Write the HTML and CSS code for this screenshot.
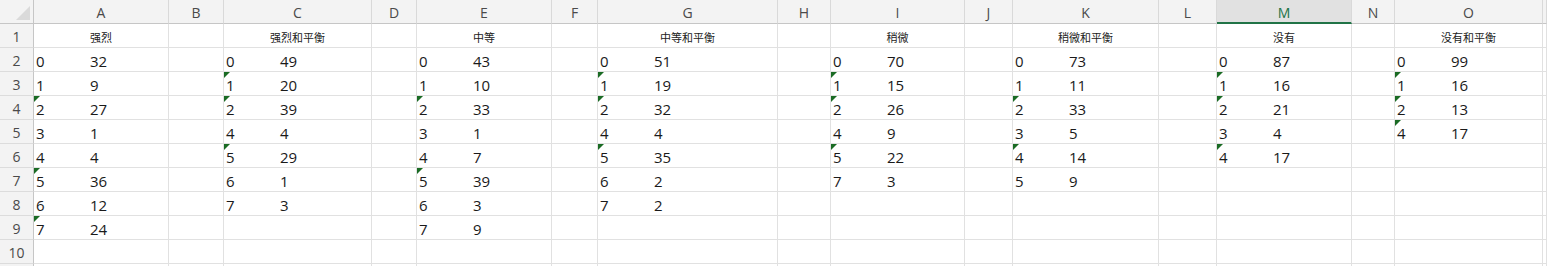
FILE: index.html
```html
<!DOCTYPE html>
<html lang="zh-CN">
<head>
    <meta charset="UTF-8">
    <meta name="viewport" content="width=device-width, initial-scale=1.0">
    <title>Sheet1</title>
    <link rel="stylesheet" href="styles.css">
</head>
<body>
    <div class="sheet">
        <!-- column letters -->
        <div class="row heads">
            <div class="corner"></div>
            <div class="h">A</div><div class="h">B</div><div class="h">C</div><div class="h">D</div>
            <div class="h">E</div><div class="h">F</div><div class="h">G</div><div class="h">H</div>
            <div class="h">I</div><div class="h">J</div><div class="h">K</div><div class="h">L</div>
            <div class="h active">M</div><div class="h">N</div><div class="h">O</div><div class="h"></div>
        </div>

        <div class="row">
            <div class="n">1</div>
            <div class="c t">强烈</div><div class="c"></div>
            <div class="c t">强烈和平衡</div><div class="c"></div>
            <div class="c t">中等</div><div class="c"></div>
            <div class="c t">中等和平衡</div><div class="c"></div>
            <div class="c t">稍微</div><div class="c"></div>
            <div class="c t">稍微和平衡</div><div class="c"></div>
            <div class="c t">没有</div><div class="c"></div>
            <div class="c t">没有和平衡</div><div class="c"></div>
        </div>

        <div class="row">
            <div class="n">2</div>
            <div class="c"><span class="k">0</span>32</div><div class="c"></div>
            <div class="c"><span class="k">0</span>49</div><div class="c"></div>
            <div class="c"><span class="k">0</span>43</div><div class="c"></div>
            <div class="c"><span class="k">0</span>51</div><div class="c"></div>
            <div class="c"><span class="k">0</span>70</div><div class="c"></div>
            <div class="c"><span class="k">0</span>73</div><div class="c"></div>
            <div class="c"><span class="k">0</span>87</div><div class="c"></div>
            <div class="c"><span class="k">0</span>99</div><div class="c"></div>
        </div>

        <div class="row">
            <div class="n">3</div>
            <div class="c"><span class="k">1</span>9</div><div class="c"></div>
            <div class="c e"><span class="k">1</span>20</div><div class="c"></div>
            <div class="c"><span class="k">1</span>10</div><div class="c"></div>
            <div class="c e"><span class="k">1</span>19</div><div class="c"></div>
            <div class="c e"><span class="k">1</span>15</div><div class="c"></div>
            <div class="c"><span class="k">1</span>11</div><div class="c"></div>
            <div class="c e"><span class="k">1</span>16</div><div class="c"></div>
            <div class="c e"><span class="k">1</span>16</div><div class="c"></div>
        </div>

        <div class="row">
            <div class="n">4</div>
            <div class="c e"><span class="k">2</span>27</div><div class="c"></div>
            <div class="c e"><span class="k">2</span>39</div><div class="c"></div>
            <div class="c e"><span class="k">2</span>33</div><div class="c"></div>
            <div class="c e"><span class="k">2</span>32</div><div class="c"></div>
            <div class="c e"><span class="k">2</span>26</div><div class="c"></div>
            <div class="c e"><span class="k">2</span>33</div><div class="c"></div>
            <div class="c e"><span class="k">2</span>21</div><div class="c"></div>
            <div class="c e"><span class="k">2</span>13</div><div class="c"></div>
        </div>

        <div class="row">
            <div class="n">5</div>
            <div class="c"><span class="k">3</span>1</div><div class="c"></div>
            <div class="c"><span class="k">4</span>4</div><div class="c"></div>
            <div class="c"><span class="k">3</span>1</div><div class="c"></div>
            <div class="c"><span class="k">4</span>4</div><div class="c"></div>
            <div class="c"><span class="k">4</span>9</div><div class="c"></div>
            <div class="c"><span class="k">3</span>5</div><div class="c"></div>
            <div class="c"><span class="k">3</span>4</div><div class="c"></div>
            <div class="c e"><span class="k">4</span>17</div><div class="c"></div>
        </div>

        <div class="row">
            <div class="n">6</div>
            <div class="c"><span class="k">4</span>4</div><div class="c"></div>
            <div class="c e"><span class="k">5</span>29</div><div class="c"></div>
            <div class="c"><span class="k">4</span>7</div><div class="c"></div>
            <div class="c e"><span class="k">5</span>35</div><div class="c"></div>
            <div class="c e"><span class="k">5</span>22</div><div class="c"></div>
            <div class="c e"><span class="k">4</span>14</div><div class="c"></div>
            <div class="c e"><span class="k">4</span>17</div><div class="c"></div>
            <div class="c"></div><div class="c"></div>
        </div>

        <div class="row">
            <div class="n">7</div>
            <div class="c e"><span class="k">5</span>36</div><div class="c"></div>
            <div class="c"><span class="k">6</span>1</div><div class="c"></div>
            <div class="c e"><span class="k">5</span>39</div><div class="c"></div>
            <div class="c"><span class="k">6</span>2</div><div class="c"></div>
            <div class="c"><span class="k">7</span>3</div><div class="c"></div>
            <div class="c"><span class="k">5</span>9</div><div class="c"></div>
            <div class="c"></div><div class="c"></div>
            <div class="c"></div><div class="c"></div>
        </div>

        <div class="row">
            <div class="n">8</div>
            <div class="c"><span class="k">6</span>12</div><div class="c"></div>
            <div class="c"><span class="k">7</span>3</div><div class="c"></div>
            <div class="c"><span class="k">6</span>3</div><div class="c"></div>
            <div class="c"><span class="k">7</span>2</div><div class="c"></div>
            <div class="c"></div><div class="c"></div>
            <div class="c"></div><div class="c"></div>
            <div class="c"></div><div class="c"></div>
            <div class="c"></div><div class="c"></div>
        </div>

        <div class="row">
            <div class="n">9</div>
            <div class="c e"><span class="k">7</span>24</div><div class="c"></div>
            <div class="c"></div><div class="c"></div>
            <div class="c"><span class="k">7</span>9</div><div class="c"></div>
            <div class="c"></div><div class="c"></div>
            <div class="c"></div><div class="c"></div>
            <div class="c"></div><div class="c"></div>
            <div class="c"></div><div class="c"></div>
            <div class="c"></div><div class="c"></div>
        </div>

        <div class="row">
            <div class="n">10</div>
            <div class="c"></div><div class="c"></div>
            <div class="c"></div><div class="c"></div>
            <div class="c"></div><div class="c"></div>
            <div class="c"></div><div class="c"></div>
            <div class="c"></div><div class="c"></div>
            <div class="c"></div><div class="c"></div>
            <div class="c"></div><div class="c"></div>
            <div class="c"></div><div class="c"></div>
        </div>

        <!-- next row, only its top edge shows -->
        <div class="row">
            <div class="n"></div>
            <div class="c"></div><div class="c"></div>
            <div class="c"></div><div class="c"></div>
            <div class="c"></div><div class="c"></div>
            <div class="c"></div><div class="c"></div>
            <div class="c"></div><div class="c"></div>
            <div class="c"></div><div class="c"></div>
            <div class="c"></div><div class="c"></div>
            <div class="c"></div><div class="c"></div>
        </div>
    </div>
</body>
</html>
```

FILE: styles.css
```css
/* Excel-like grid */
:root {
    --grid-color: #e1e1e1;
    --head-bg: #f3f3f3;
    --head-line: #c6c6c6;
    --head-text: #4a4a4a;
    --green: #217346;
    --text-color: #1a1a1a;
}

body {
    margin: 0;
    background: #ffffff;
    color: var(--text-color);
    font-family: "Open Sans", "Noto Sans", sans-serif;
    overflow: hidden;
}

.sheet {
    width: 1547px;
    height: 266px;
    overflow: hidden;
}

.row {
    display: grid;
    grid-template-columns: 34px 135px 55px 148px 45px 135px 46px 180px 53px 134px 48px 146px 58px 135px 43px 148px 1fr;
    height: 24px;
}

/* column headers */
.heads {
    background: var(--head-bg);
}

.corner {
    position: relative;
    border-right: 1px solid var(--head-line);
    border-bottom: 1px solid var(--head-line);
}

.corner::after {
    content: "";
    position: absolute;
    right: 3px;
    bottom: 3px;
    border-left: 14px solid transparent;
    border-bottom: 14px solid #dadada;
}

.h {
    box-sizing: border-box;
    height: 24px;
    padding-top: 2px;
    line-height: 22px;
    font-size: 14px;
    text-align: center;
    color: var(--head-text);
    border-right: 1px solid #d9d9d9;
    border-bottom: 1px solid var(--head-line);
}

.h.active {
    background: #e1e1e1;
    color: var(--green);
    border-bottom: 2px solid var(--green);
}

/* row numbers */
.n {
    box-sizing: border-box;
    height: 24px;
    padding-top: 2px;
    line-height: 22px;
    font-size: 14px;
    text-align: center;
    color: var(--head-text);
    background: var(--head-bg);
    border-right: 1px solid var(--head-line);
    border-bottom: 1px solid #dcdcdc;
}

/* cells */
.c {
    position: relative;
    box-sizing: border-box;
    height: 24px;
    padding: 2px 0 0 2px;
    line-height: 22px;
    font-size: 15px;
    white-space: nowrap;
    border-right: 1px solid var(--grid-color);
    border-bottom: 1px solid var(--grid-color);
}

.c .k {
    display: inline-block;
    width: 54px;
}

.c.t {
    padding-left: 0;
    text-align: center;
    font-family: "Noto Sans CJK SC", sans-serif;
    font-size: 11px;
    color: #222222;
}

/* "number stored as text" marker */
.c.e::before {
    content: "";
    position: absolute;
    top: 0;
    left: 0;
    border-top: 6px solid #1a6b24;
    border-right: 6px solid transparent;
}
```
